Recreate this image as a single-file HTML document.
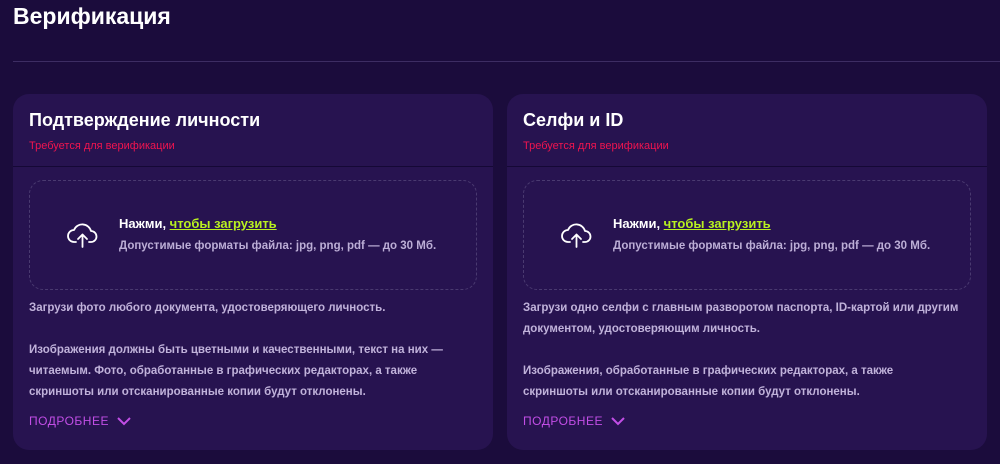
<!DOCTYPE html>
<html><head><meta charset="utf-8"><style>
*{margin:0;padding:0;box-sizing:border-box}
body{width:1000px;height:464px;background:#1b0c3c;font-family:"Liberation Sans","Noto Sans CJK SC",sans-serif;overflow:hidden;position:relative;color:#fff}
h1{position:absolute;left:13px;top:3px;font-size:23px;font-weight:bold}
.rule{position:absolute;left:13px;right:0;top:61px;height:1px;background:#3d2d63}
.card{position:absolute;top:94px;width:480px;height:356px;background:#271350;border-radius:16px}
.hd{height:73px;border-bottom:1px solid #150836;padding:15px 16px 0}
.hd h2{font-size:18px;font-weight:bold;line-height:22px}
.req{color:#f0144f;font-size:11px;margin-top:9px}
.dz{position:absolute;left:16px;top:86px;width:448px;height:110px;border:1px dashed #4a3a70;border-radius:14px}
.dz svg{position:absolute;left:37px;top:40px}
.t1{position:absolute;left:89px;top:35px;font-size:13px;font-weight:bold}
.t1 a{color:#b8f020;text-decoration:underline}
.t2{position:absolute;left:89px;top:59px;font-size:11.5px;color:#bcaed6;font-weight:bold}
.body{position:absolute;left:16px;top:204px;width:445px;font-size:11.5px;line-height:21px;color:#c0b2da;font-weight:bold;white-space:nowrap}
.more{position:absolute;left:16px;top:320px;font-size:12px;color:#c24ee6;letter-spacing:.5px}
.more svg{vertical-align:middle;margin-left:8px}
</style></head><body>
<h1>Верификация</h1>
<div class="rule"></div>
<div class="card" style="left:13px">
<div class="hd"><h2>Подтверждение личности</h2><div class="req">Требуется для верификации</div></div>
<div class="dz"><svg width="32" height="28" viewBox="0 0 32 28" fill="none" stroke="#fff" stroke-width="1.8" stroke-linecap="round" stroke-linejoin="round"><path d="M9 21H7a6 6 0 0 1 0-12 9 9 0 0 1 17 1 5.5 5.5 0 0 1 0 11h-2"/><path d="M15.5 26V14M11 18l4.5-4.5L20 18"/></svg>
<div class="t1">Нажми, <a>чтобы загрузить</a></div>
<div class="t2">Допустимые форматы файла: jpg, png, pdf — до 30 Мб.</div></div>
<div class="body">Загрузи фото любого документа, удостоверяющего личность.<br><br>Изображения должны быть цветными и качественными, текст на них —<br>читаемым. Фото, обработанные в графических редакторах, а также<br>скриншоты или отсканированные копии будут отклонены.</div>
<div class="more">ПОДРОБНЕЕ<svg width="14" height="9" viewBox="0 0 14 9" fill="none" stroke="#c24ee6" stroke-width="2"><path d="M1 1l6 6 6-6"/></svg></div>
</div>
<div class="card" style="left:507px">
<div class="hd"><h2>Селфи и ID</h2><div class="req">Требуется для верификации</div></div>
<div class="dz"><svg width="32" height="28" viewBox="0 0 32 28" fill="none" stroke="#fff" stroke-width="1.8" stroke-linecap="round" stroke-linejoin="round"><path d="M9 21H7a6 6 0 0 1 0-12 9 9 0 0 1 17 1 5.5 5.5 0 0 1 0 11h-2"/><path d="M15.5 26V14M11 18l4.5-4.5L20 18"/></svg>
<div class="t1">Нажми, <a>чтобы загрузить</a></div>
<div class="t2">Допустимые форматы файла: jpg, png, pdf — до 30 Мб.</div></div>
<div class="body">Загрузи одно селфи с главным разворотом паспорта, ID-картой или другим<br>документом, удостоверяющим личность.<br><br>Изображения, обработанные в графических редакторах, а также<br>скриншоты или отсканированные копии будут отклонены.</div>
<div class="more">ПОДРОБНЕЕ<svg width="14" height="9" viewBox="0 0 14 9" fill="none" stroke="#c24ee6" stroke-width="2"><path d="M1 1l6 6 6-6"/></svg></div>
</div>
</body></html>
